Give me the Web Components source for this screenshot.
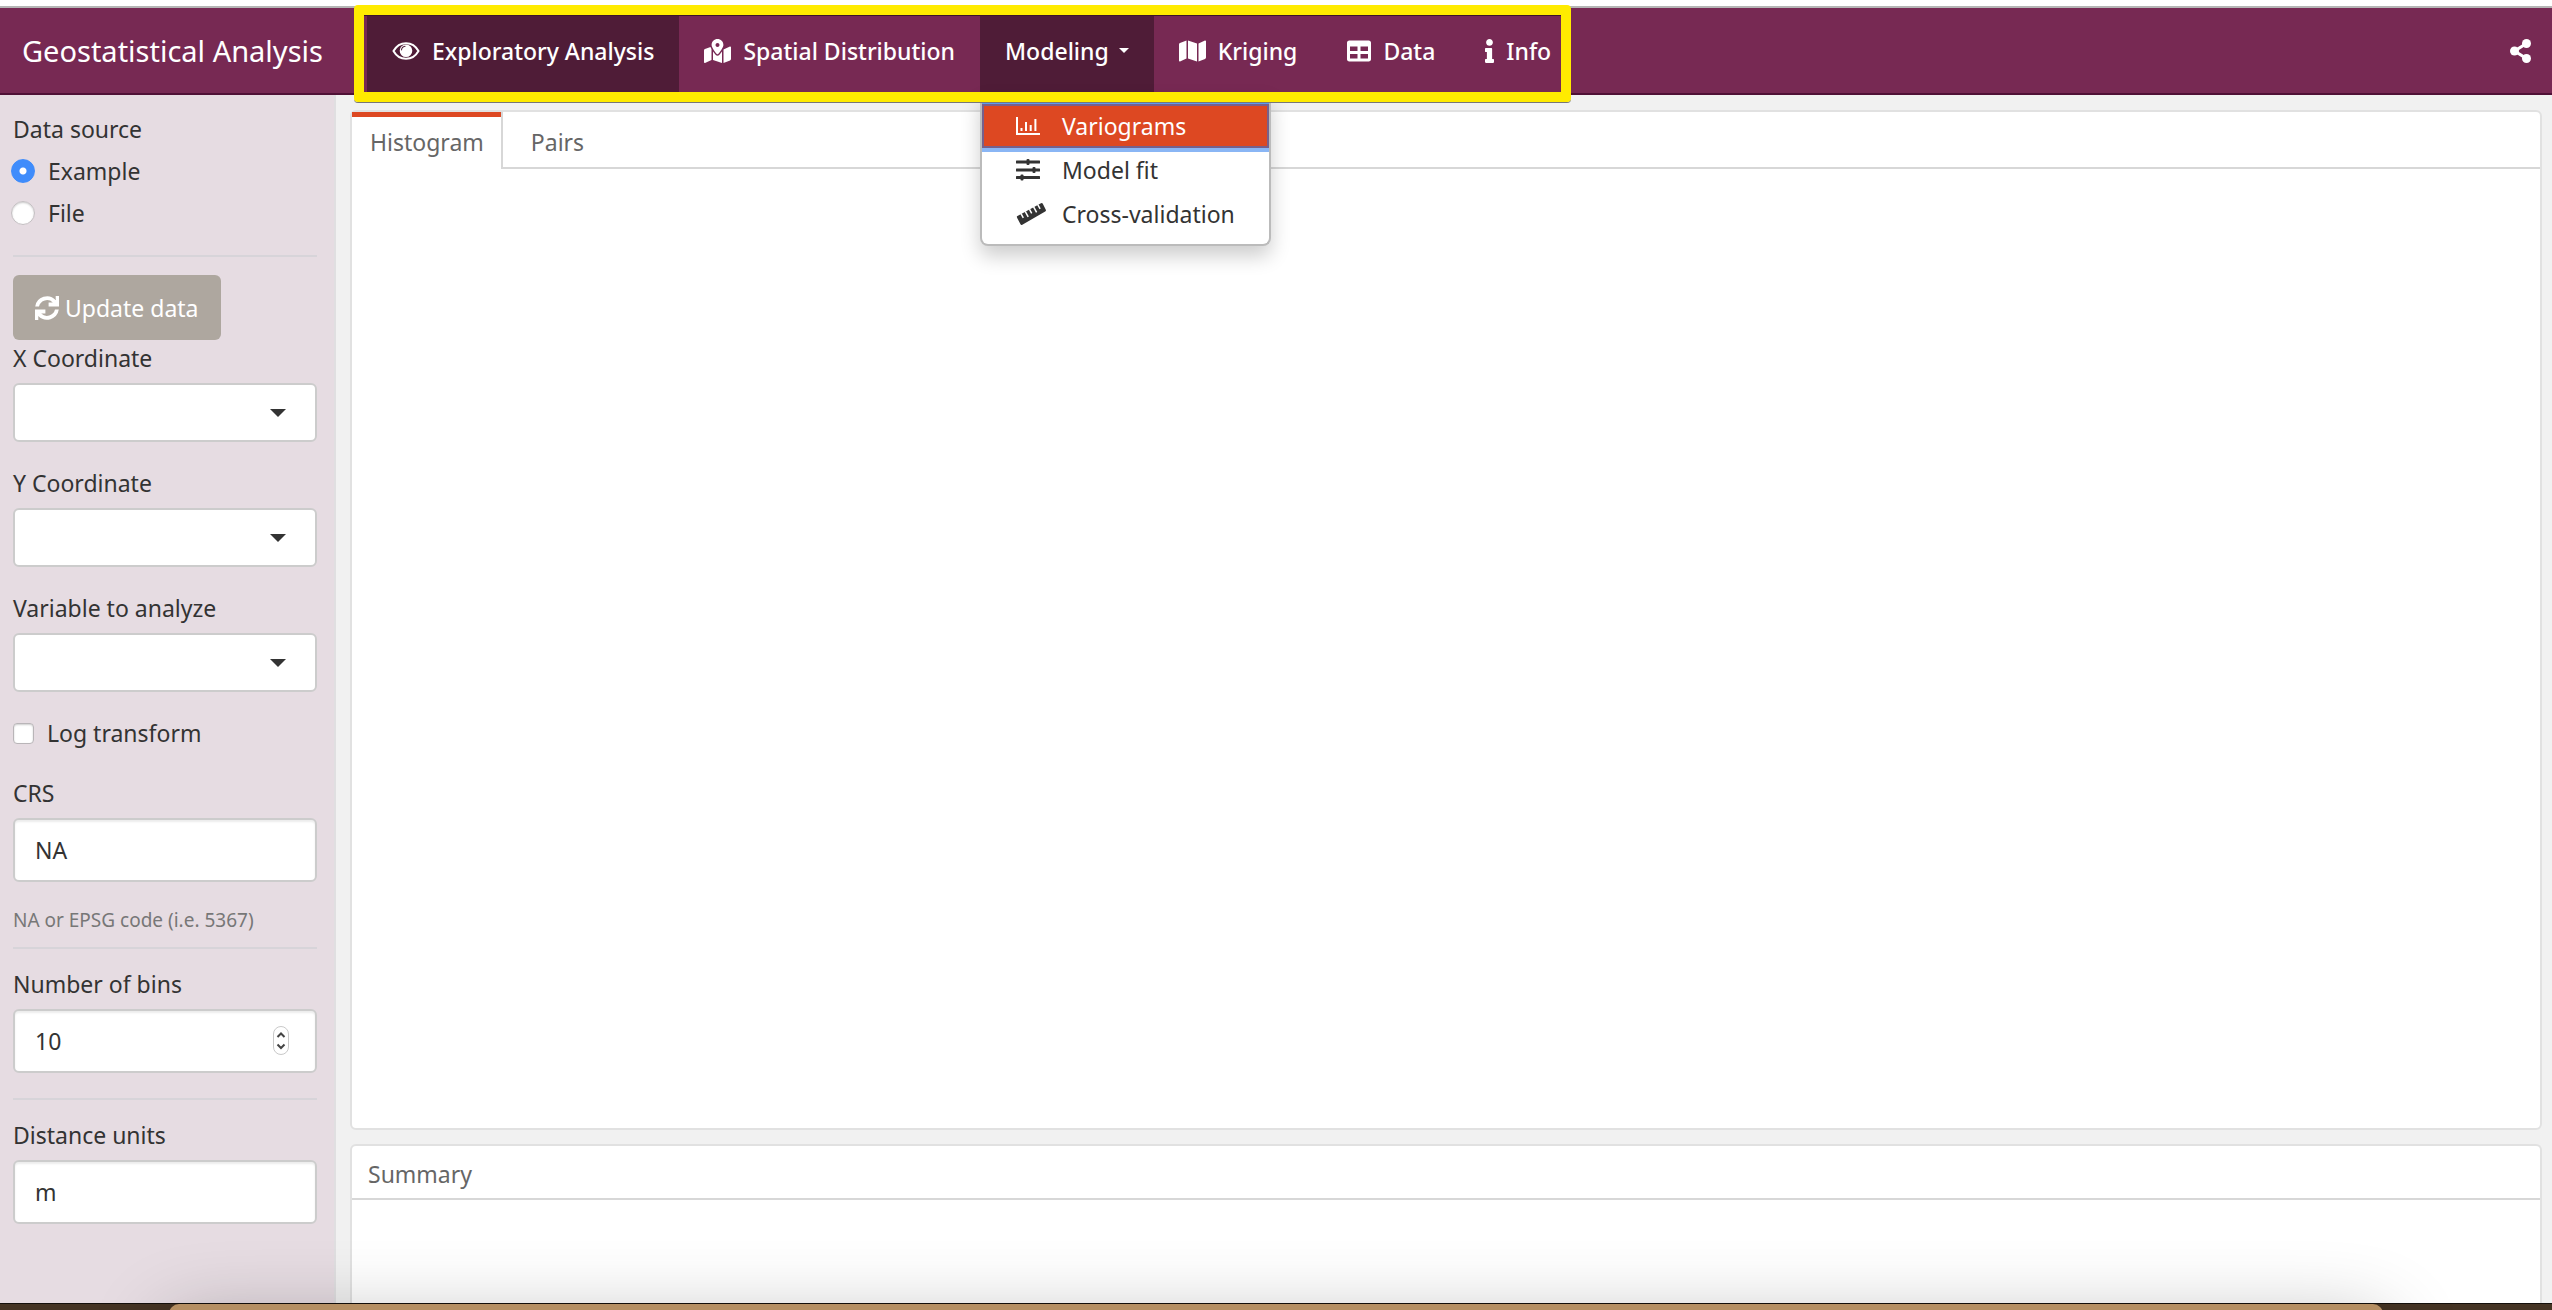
<!DOCTYPE html>
<html lang="en">
<head>
<meta charset="utf-8">
<title>Geostatistical Analysis</title>
<style>
  html, body { margin: 0; height: 100%; }
  body {
    font-family: "Noto Sans", "Open Sans", sans-serif;
    font-size: 23px;
    line-height: 34px;
    color: #333;
    background: #f1f1f1;
    overflow: hidden;
  }
</style>
</head>
<body>
<app-shell>
  <app-navbar slot="header" brand="Geostatistical Analysis">
    <nav-item icon="eye" label="Exploratory Analysis" active></nav-item>
    <nav-item icon="map-marked" label="Spatial Distribution"></nav-item>
    <nav-menu label="Modeling">
      <menu-item icon="chart" label="Variograms" active></menu-item>
      <menu-item icon="sliders" label="Model fit"></menu-item>
      <menu-item icon="ruler" label="Cross-validation"></menu-item>
    </nav-menu>
    <nav-item icon="map" label="Kriging"></nav-item>
    <nav-item icon="table" label="Data"></nav-item>
    <nav-item icon="info" label="Info"></nav-item>
  </app-navbar>

  <side-panel slot="sidebar">
    <radio-group label="Data source" options="Example,File" value="Example"></radio-group>
    <side-rule></side-rule>
    <action-button icon="sync">Update data</action-button>
    <select-field label="X Coordinate"></select-field>
    <select-field label="Y Coordinate"></select-field>
    <select-field label="Variable to analyze"></select-field>
    <check-field label="Log transform"></check-field>
    <text-field label="CRS" value="NA" help="NA or EPSG code (i.e. 5367)"></text-field>
    <side-rule></side-rule>
    <text-field label="Number of bins" type="number" value="10"></text-field>
    <side-rule></side-rule>
    <text-field label="Distance units" value="m"></text-field>
  </side-panel>

  <tab-panel class="grow" tabs="Histogram,Pairs"></tab-panel>
  <title-panel heading="Summary"></title-panel>
</app-shell>

<script>
const ICONS = {
  eye: ['0 0 28 24', '<path fill="none" stroke="currentColor" stroke-width="2" d="M1.5 12C4 7.500 8.500 4.200 14 4.200S24 7.500 26.500 12C24 16.500 19.500 19.800 14 19.800S4 16.500 1.500 12z"/><path d="M14 5.500a6.300 6.300 0 1 0 6.300 6.300A6.300 6.300 0 0 0 14 5.500zm-1 2.300c-1.700.3-2.800 1.500-3 3.200-.1.600-1 .6-1-.1.100-2.200 1.700-4 4-4.200.8 0 .8 1 0 1.100z" fill-rule="evenodd"/>'],
  'map-marked': ['0 0 576 512', '<path d="M288 0c-69.590 0-126 56.410-126 126 0 56.260 82.350 158.800 113.900 196.020 6.390 7.540 17.820 7.540 24.200 0C331.650 284.800 414 182.260 414 126 414 56.410 357.590 0 288 0zm0 168c-23.200 0-42-18.800-42-42s18.800-42 42-42 42 18.800 42 42-18.800 42-42 42zM20.120 215.950A32.006 32.006 0 0 0 0 245.660v250.320c0 11.320 11.430 19.060 21.940 14.860L160 448V214.920c-8.840-15.980-16.070-31.540-21.250-46.420L20.120 215.950zM288 359.670c-14.070 0-27.380-6.180-36.510-16.960-19.660-23.200-40.570-49.620-59.490-76.720v182l192 64V266c-18.920 27.090-39.820 53.520-59.490 76.720-9.130 10.770-22.440 16.950-36.510 16.950zm266.060-198.510L416 224v288l139.880-55.950A31.996 31.996 0 0 0 576 426.340V176.020c0-11.320-11.430-19.060-21.940-14.860z"/>'],
  map: ['0 0 576 512', '<path d="M0 117.660v346.320c0 11.320 11.430 19.060 21.940 14.860L160 416V32L20.120 87.950A32.006 32.006 0 0 0 0 117.660zM192 416l192 64V96L192 32v384zM554.060 33.160L416 96v384l139.880-55.950A31.996 31.996 0 0 0 576 394.340V48.020c0-11.320-11.430-19.060-21.940-14.860z"/>'],
  table: ['0 0 512 512', '<path d="M464 32H48C21.490 32 0 53.490 0 80v352c0 26.510 21.490 48 48 48h416c26.510 0 48-21.490 48-48V80c0-26.510-21.490-48-48-48zM224 416H64v-96h160v96zm0-160H64v-96h160v96zm224 160H288v-96h160v96zm0-160H288v-96h160v96z"/>'],
  info: ['0 0 192 512', '<path d="M20 424.229h20V279.771H20c-11.046 0-20-8.954-20-20V212c0-11.046 8.954-20 20-20h112c11.046 0 20 8.954 20 20v212.229h20c11.046 0 20 8.954 20 20V492c0 11.046-8.954 20-20 20H20c-11.046 0-20-8.954-20-20v-47.771c0-11.046 8.954-20 20-20zM96 0C56.235 0 24 32.235 24 72s32.235 72 72 72 72-32.235 72-72S135.764 0 96 0z"/>'],
  share: ['0 0 448 512', '<circle cx="352" cy="96" r="96"/><circle cx="96" cy="256" r="96"/><circle cx="352" cy="416" r="96"/><path fill="none" stroke="currentColor" stroke-width="66" d="M352 96L96 256l256 160"/>'],
  chart: ['0 0 24 24', '<path d="M0 3h2v16h22v2H0zM4.500 14h2v3h-2zM9 8h2v9H9zM13.700 11h2v6h-2zM18.400 5h2v12h-2z"/>'],
  sliders: ['0 0 24 24', '<rect y="2.500" width="24" height="3" rx=".5"/><rect y="10.500" width="24" height="3" rx=".5"/><rect y="18" width="24" height="3" rx=".5"/><rect x="10.500" y="1" width="3" height="6" rx="1"/><rect x="16.500" y="9" width="3" height="6" rx="1"/><rect x="4.500" y="16.500" width="3" height="6" rx="1"/>'],
  ruler: ['0 0 30 24', '<path d="M1 14.200L25 1.300q1.200-.6 1.800.5l3 6q.5 1.100-.6 1.700L6.300 22.800q-1.200.6-1.800-.5l-3.300-6.200q-.6-1.200-.2-1.900z"/><path fill="none" stroke="#fff" stroke-width="1.500" d="M5 11.700l2.300 4.200M9.200 9.400l3 5.500M13.400 7.100l2.300 4.200M17.600 4.900l3 5.500M21.800 2.600l2.300 4.200"/>'],
  sync: ['0 0 24 24', '<path d="M24 0v10.500H13.600V6.600h4.200A8.200 8.200 0 0 0 4 10.400H.2A12 12 0 0 1 20.700 4V0z"/><path d="M0 24V13.500h10.400v3.900H6.200A8.200 8.200 0 0 0 20 13.600h3.800A12 12 0 0 1 3.300 20v4z"/>']
};

/* Shared base: renders view() into an open shadow root. */
class Base extends HTMLElement {
  connectedCallback() {
    if (this.shadowRoot) return;
    this.attachShadow({ mode: 'open' }).innerHTML =
      `<style>*{box-sizing:border-box}:host{display:block}${this.css()}</style>${this.view()}`;
  }
  at(name) { return this.getAttribute(name) || ''; }
  css() { return ''; }
  view() { return '<slot></slot>'; }
}
const define = (name, cls) => customElements.define(name, cls);

define('ui-icon', class extends Base {
  css() { return ':host{display:flex;flex:none}svg{display:block;height:24px;fill:currentColor}'; }
  view() {
    const [box, body] = ICONS[this.at('name')];
    return `<svg viewBox="${box}" aria-hidden="true">${body}</svg>`;
  }
});

define('app-shell', class extends Base {
  css() { return `
    :host{display:flex;flex-direction:column;height:100vh;overflow:hidden;background:#f1f1f1}
    .edge{flex:none;height:8px;background:linear-gradient(#fff 6px,#b5b5b5 6px)}
    .body{flex:1;min-height:0;display:flex}
    main{flex:1;min-width:0;display:flex;flex-direction:column;gap:14px;padding:15px 10px 0 14px}
    ::slotted(.grow){flex:1}
    .desk{flex:none;height:7px;background:#453424;border-top:1px solid #15100c;padding:0 169px}
    .dock{height:160px;background:#b58f63;border-radius:10px;box-shadow:0 20px 80px rgba(0,0,0,.3);position:relative}`; }
  view() { return `
    <div class="edge"></div><slot name="header"></slot>
    <div class="body"><slot name="sidebar"></slot><main><slot></slot></main></div>
    <div class="desk"><div class="dock"></div></div>`; }
});

define('app-navbar', class extends Base {
  css() { return `
    :host{flex:none;position:relative;z-index:2;font-weight:500}
    header{display:flex;height:87px;background:#772953;border-bottom:2px solid #4f1136;color:#fff}
    a{display:flex;align-items:center;color:inherit;text-decoration:none}
    .brand{font-size:29px;font-weight:400;padding:0 44px 0 22px;white-space:nowrap}
    nav{display:flex;position:relative}
    .frame{position:absolute;inset:-3px 5px -9px -13px;border:10px solid #ffeb00;border-radius:4px;box-shadow:0 1px 0 #777,inset 0 1px 0 #3c1529;pointer-events:none;z-index:2}
    .share{margin-left:auto;padding:0 21px}`; }
  view() { return `
    <header><a class="brand" href="#">${this.at('brand')}</a>
    <nav><slot></slot><div class="frame"></div></nav>
    <a class="share" href="#" aria-label="Share"><ui-icon name="share"></ui-icon></a></header>`; }
});

define('nav-item', class extends Base {
  css() { return `
    a{display:flex;align-items:center;gap:12px;height:100%;padding:0 25px;color:#fff;text-decoration:none;white-space:nowrap}
    :host([active]) a{background:#4f1c37}`; }
  view() { return `<a href="#"><ui-icon name="${this.at('icon')}"></ui-icon>${this.at('label')}</a>`; }
});

define('nav-menu', class extends Base {
  css() { return `
    :host{position:relative}
    button{display:flex;align-items:center;gap:10px;height:100%;padding:0 25px;border:0;background:#4f1c37;color:#fff;font:inherit}
    .caret{border:5px solid transparent;border-top-color:#fff;border-bottom:0}
    .menu{position:absolute;top:85px;left:0;width:291px;padding:11px 0 8px;border:2px solid #bbb;border-top:0;border-radius:0 0 8px 8px;background:#fff;background-clip:padding-box;box-shadow:0 10px 20px rgba(0,0,0,.2);font-weight:400}`; }
  view() { return `<button aria-expanded="true">${this.at('label')}<span class="caret"></span></button><div class="menu"><slot></slot></div>`; }
});

define('menu-item', class extends Base {
  css() { return `
    a{display:flex;align-items:center;height:44px;padding-left:34px;color:#333;text-decoration:none;white-space:nowrap}
    ui-icon{width:46px}
    :host([active]) a{background:#dd4822;color:#fff;outline:2px solid #77608c;outline-offset:-2px;box-shadow:0 4px 0 #8ab6f5,0 -2px 0 #5d9bf0}`; }
  view() { return `<a href="#"><ui-icon name="${this.at('icon')}"></ui-icon>${this.at('label')}</a>`; }
});

define('side-panel', class extends Base {
  css() { return `
    :host{flex:none;width:336px;box-sizing:border-box;padding:17px 17px 0 13px;background:#e6dce2;border-right:2px solid #e0dfe1}`; }
});

define('side-rule', class extends Base {
  css() { return 'hr{margin:0 0 18px;border:0;height:2px;background:#d7d4d9}'; }
  view() { return '<hr>'; }
});

define('radio-group', class extends Base {
  css() { return `
    fieldset{margin:0 0 25px;padding:0;border:0}
    legend{padding:0}
    label{display:flex;align-items:center;gap:13px;margin-top:8px}
    input{appearance:none;flex:none;width:24px;height:24px;margin:0 0 0 -2px;border-radius:50%;background:#fff;border:1px solid #c4bfc2;box-shadow:inset 0 1px 2px rgba(0,0,0,.2)}
    input:checked{background:radial-gradient(circle,#fff 3px,#3f8cfb 4px);border-color:#3f8cfb;box-shadow:none}`; }
  view() { return `<fieldset><legend>${this.at('label')}</legend>${this.at('options').split(',').map(o =>
    `<label><input type="radio" name="r" ${o === this.at('value') ? 'checked' : ''}>${o}</label>`).join('')}</fieldset>`; }
});

define('action-button', class extends Base {
  css() { return `
    :host{margin-bottom:1px}
    button{display:flex;align-items:center;gap:6px;height:65px;padding:0 22px;border:0;border-radius:6px;background:#aea79f;color:#fff;font:inherit;white-space:nowrap}`; }
  view() { return `<button><ui-icon name="${this.at('icon')}"></ui-icon><slot></slot></button>`; }
});

define('select-field', class extends Base {
  css() { return `
    :host{margin-bottom:24px}
    label{display:block;margin-bottom:8px}
    .box{display:grid;align-items:center}
    .box>*{grid-area:1/1}
    select{appearance:none;width:100%;height:59px;padding:0 24px;border:2px solid #ccc;border-radius:6px;background:#fff;font:inherit;color:inherit}
    .caret{justify-self:end;margin-right:31px;border:8px solid transparent;border-top-color:#333;border-bottom:0;pointer-events:none}`; }
  view() { return `<label for="f">${this.at('label')}</label><div class="box"><select id="f"><option></option></select><span class="caret"></span></div>`; }
});

define('check-field', class extends Base {
  css() { return `
    :host{margin-bottom:26px}
    label{display:flex;align-items:center;gap:13px}
    input{appearance:none;flex:none;width:21px;height:21px;margin:0;border-radius:4px;background:#fff;border:1px solid #b9b5b8;box-shadow:inset 0 1px 2px rgba(0,0,0,.2)}`; }
  view() { return `<label><input type="checkbox">${this.at('label')}</label>`; }
});

define('text-field', class extends Base {
  css() { return `
    :host{margin-bottom:25px}
    :host([help]){margin-bottom:13px}
    label{display:block;margin-bottom:8px}
    .box{display:grid;align-items:center}
    .box>*{grid-area:1/1}
    input{appearance:textfield;width:100%;height:64px;padding:0 20px;border:2px solid #ccc;border-radius:6px;background:#fff;box-shadow:inset 0 2px 2px rgba(0,0,0,.075);font:inherit;color:inherit}
    input::-webkit-inner-spin-button{display:none}
    .spin{justify-self:end;margin-right:28px;pointer-events:none}
    p{margin:24px 0 0;font-size:19px;line-height:28px;color:#777;white-space:nowrap}`; }
  view() {
    const type = this.at('type') || 'text';
    return `<label for="f">${this.at('label')}</label><div class="box"><input id="f" type="${type}" value="${this.at('value')}">
    ${type === 'number' ? '<svg class="spin" width="16" height="30" fill="none" stroke="#c9c9c9" aria-hidden="true"><rect x=".5" y=".5" width="15" height="28" rx="7.500"/><path stroke="#444" stroke-width="2" d="M4.500 11L8 7.500l3.500 3.500M4.500 18.500L8 22l3.500-3.500"/></svg>' : ''}</div>
    ${this.at('help') ? `<p>${this.at('help')}</p>` : ''}`;
  }
});

const PANEL = 'border:2px solid #e1e1e1;border-radius:6px;background:#fff;box-sizing:border-box;color:#666;';

define('tab-panel', class extends Base {
  css() { return `
    :host{${PANEL}}
    .tabs{display:flex;height:57px;border-bottom:2px solid #d7d7d7}
    button{height:55px;padding:4px 28px 0;border:0;background:#fff;font:inherit;color:inherit}
    button[aria-selected=true]{height:57px;padding:4px 17px 2px 18px;border-right:2px solid #d7d7d7;box-shadow:inset 0 5px 0 #dd4822}`; }
  view() { return `<div class="tabs" role="tablist">${this.at('tabs').split(',').map((t, i) =>
    `<button role="tab" aria-selected="${i === 0}">${t}</button>`).join('')}</div><slot></slot>`; }
});

define('title-panel', class extends Base {
  css() { return `
    :host{${PANEL}flex:none;height:159px;border-bottom:0;border-radius:6px 6px 0 0}
    h2{margin:0;padding:11px 16px 7px;border-bottom:2px solid #d7d7d7;font:inherit}`; }
  view() { return `<h2>${this.at('heading')}</h2><slot></slot>`; }
});
</script>
</body>
</html>
